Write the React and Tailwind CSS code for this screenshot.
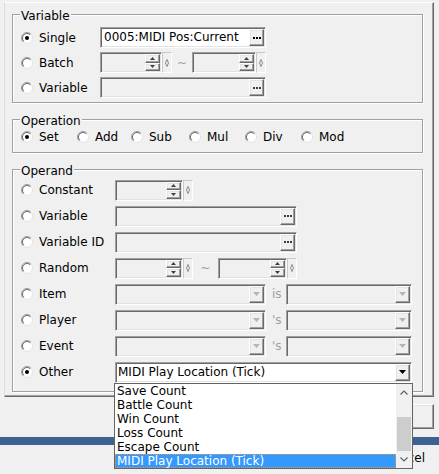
import React from 'react';

const sunken =
  'border border-t-[#a0a0a0] border-l-[#a0a0a0] border-b-white border-r-white shadow-[inset_1px_1px_0_#696969,inset_-1px_-1px_0_#e3e3e3]';
const raised =
  'border border-t-white border-l-white border-b-[#696969] border-r-[#696969] shadow-[inset_-1px_-1px_0_#a0a0a0,inset_1px_1px_0_#e3e3e3]';

const Radio = ({ checked }) => (
  <svg width="12" height="12" viewBox="0 0 12 12" className="shrink-0">
    <circle cx="6" cy="6" r="5.5" fill="#fff" stroke="#e3e3e3" />
    <path d="M2.1 9.9 A5.5 5.5 0 0 1 9.9 2.1" fill="none" stroke="#a0a0a0" />
    <path d="M2.8 9.2 A4.5 4.5 0 0 1 9.2 2.8" fill="none" stroke="#696969" />
    {checked && <circle cx="6" cy="6" r="2" fill="#000" />}
  </svg>
);

const Opt = ({ label, checked, w }) => (
  <div className={`flex items-center shrink-0 ${w}`}>
    <Radio checked={checked} />
    <span className="ml-[6px] leading-[14px]">{label}</span>
  </div>
);

const Dots = ({ on }) => (
  <div className={`w-[15px] h-full shrink-0 ${raised} bg-[#f0f0f0] flex items-center justify-center gap-[1px]`}>
    {[0, 1, 2].map((i) => (
      <span key={i} className={`w-[2px] h-[2px] ${on ? 'bg-black' : 'bg-[#3c3c3c]'}`} />
    ))}
  </div>
);

const TextBox = ({ w, value, on }) => (
  <div className={`${w} h-[21px] shrink-0 ${sunken} ${on ? 'bg-white' : 'bg-[#f0f0f0]'} p-[1px] flex`}>
    <div className="flex-1 min-w-0 overflow-hidden whitespace-nowrap pl-[2px] leading-[17px]">{value}</div>
    <Dots on={on} />
  </div>
);

const ArrowBtn = ({ up }) => (
  <div className={`flex-1 ${raised} bg-[#f0f0f0] flex items-center justify-center`}>
    <svg width="5" height="3" viewBox="0 0 5 3">
      <path d={up ? 'M2.5 0L5 3H0z' : 'M0 0h5L2.5 3z'} fill="#404040" />
    </svg>
  </div>
);

const Spin = ({ w }) => (
  <div className="flex shrink-0">
    <div className={`${w} h-[21px] ${sunken} bg-[#f0f0f0] p-[1px] flex justify-end`}>
      <div className="w-[15px] flex flex-col">
        <ArrowBtn up />
        <ArrowBtn />
      </div>
    </div>
    <div className="w-[10px] h-[21px] border border-t-[#c8c8c8] border-l-[#c8c8c8] border-b-white border-r-white flex items-center justify-center">
      <svg width="4" height="8" viewBox="0 0 4 8">
        <path d="M2 0.5L3.5 4L2 7.5L0.5 4z" fill="none" stroke="#808080" strokeWidth="0.9" />
      </svg>
    </div>
  </div>
);

const Combo = ({ w, value, on }) => (
  <div className={`${w} h-[21px] shrink-0 ${sunken} ${on ? 'bg-white' : 'bg-[#f0f0f0]'} p-[1px] flex`}>
    <div className="flex-1 min-w-0 pl-[1px] leading-[17px] whitespace-nowrap overflow-hidden">{value}</div>
    <div className={`w-[15px] h-full ${raised} bg-[#f0f0f0] flex items-center justify-center`}>
      <svg width="7" height="4" viewBox="0 0 7 4">
        <path d="M0 0h7L3.5 4z" fill={on ? '#000' : '#b4b4b4'} />
      </svg>
    </div>
  </div>
);

const Group = ({ title, className, children }) => (
  <div className={`relative w-[411px] border border-[#a0a0a0] shadow-[inset_1px_1px_0_#fff,1px_1px_0_#fff] ${className}`}>
    <span className="absolute left-[7px] -top-[6px] px-[1px] bg-[#f0f0f0] leading-[14px]">{title}</span>
    {children}
  </div>
);

const Row = ({ children }) => <div className="h-[26px] flex items-center pl-[8px]">{children}</div>;

const Sep = ({ w, children }) => (
  <span className={`${w} shrink-0 text-[#a0a0a0] leading-[14px]`}>{children}</span>
);

const items = ['Save Count', 'Battle Count', 'Win Count', 'Loss Count', 'Escape Count', 'MIDI Play Location (Tick)'];

export default function App() {
  return (
    <div className="relative w-[439px] h-[474px] overflow-hidden bg-[#f0f0f0] text-black text-[12px] font-['DejaVu_Sans',sans-serif] flex flex-col">
      {/* dialog page */}
      <div className="ml-[4px] mt-[2px] w-[430px] h-[395px] shrink-0 border border-t-white border-l-[#dcdcdc] border-r-[#696969] border-b-[#696969] shadow-[inset_-1px_-1px_0_#a0a0a0] flex flex-col pl-[7px]">
        <Group title="Variable" className="mt-[11px] pt-[10px] pb-[2px]">
          <div className="h-[25px] flex items-center pl-[8px]">
            <Opt label="Single" checked w="w-[79px]" />
            <TextBox w="w-[166px]" value="0005:MIDI Pos:Current" on />
          </div>
          <div className="h-[25px] flex items-center pl-[8px]">
            <Opt label="Batch" w="w-[79px]" />
            <Spin w="w-[62px]" />
            <Sep w="w-[20px] text-center">~</Sep>
            <Spin w="w-[64px]" />
          </div>
          <div className="h-[25px] flex items-center pl-[8px]">
            <Opt label="Variable" w="w-[79px]" />
            <TextBox w="w-[166px]" value="" />
          </div>
        </Group>

        <Group title="Operation" className="mt-[16px] pt-[4px] pb-[2px]">
          <Row>
            <Opt label="Set" checked w="w-[56px]" />
            <Opt label="Add" w="w-[54px]" />
            <Opt label="Sub" w="w-[58px]" />
            <Opt label="Mul" w="w-[56px]" />
            <Opt label="Div" w="w-[56px]" />
            <Opt label="Mod" w="w-[56px]" />
          </Row>
        </Group>

        <Group title="Operand" className="mt-[16px] pt-[7px] pb-[6px]">
          <Row>
            <Opt label="Constant" w="w-[94px]" />
            <Spin w="w-[68px]" />
          </Row>
          <Row>
            <Opt label="Variable" w="w-[94px]" />
            <TextBox w="w-[182px]" value="" />
          </Row>
          <Row>
            <Opt label="Variable ID" w="w-[94px]" />
            <TextBox w="w-[182px]" value="" />
          </Row>
          <Row>
            <Opt label="Random" w="w-[94px]" />
            <Spin w="w-[68px]" />
            <Sep w="w-[25px] text-center">~</Sep>
            <Spin w="w-[69px]" />
          </Row>
          <Row>
            <Opt label="Item" w="w-[94px]" />
            <Combo w="w-[151px]" />
            <Sep w="w-[20px] pl-[6px]">is</Sep>
            <Combo w="w-[126px]" />
          </Row>
          <Row>
            <Opt label="Player" w="w-[94px]" />
            <Combo w="w-[151px]" />
            <Sep w="w-[20px] pl-[6px]">'s</Sep>
            <Combo w="w-[126px]" />
          </Row>
          <Row>
            <Opt label="Event" w="w-[94px]" />
            <Combo w="w-[151px]" />
            <Sep w="w-[20px] pl-[6px]">'s</Sep>
            <Combo w="w-[126px]" />
          </Row>
          <Row>
            <Opt label="Other" checked w="w-[94px]" />
            <Combo w="w-[297px]" value="MIDI Play Location (Tick)" on />
          </Row>
        </Group>
      </div>

      {/* buttons */}
      <div className="mt-[7px] flex justify-end pr-[5px]">
        <div className={`w-[75px] h-[25px] ${raised} bg-[#f0f0f0] flex items-center justify-center`}>OK</div>
      </div>
      <div className="mt-[8px] h-[8px] bg-[#3d6190]" />
      <div className="mt-[6px] flex justify-end pr-[14px]">
        <span className="leading-[14px]">Cancel</span>
      </div>

      {/* open dropdown list */}
      <div className="absolute left-[114px] top-[383px] w-[299px] h-[86px] border border-[#646464] bg-white flex">
        <div className="flex-1 flex flex-col">
          {items.map((t, i) =>
            i === items.length - 1 ? (
              <div key={t} className="h-[14px] leading-[12px] pl-[1px] bg-[#3399ff] text-white border border-dotted border-[#e8953f]">
                {t}
              </div>
            ) : (
              <div key={t} className="h-[14px] leading-[14px] pl-[2px]">
                {t}
              </div>
            )
          )}
        </div>
        <div className="w-[16px] bg-[#f0f0f0] flex flex-col">
          <div className="h-[17px] flex items-center justify-center">
            <svg width="8" height="5" viewBox="0 0 8 5">
              <path d="M0.5 4.5L4 1L7.5 4.5" fill="none" stroke="#606060" strokeWidth="1.2" />
            </svg>
          </div>
          <div className="flex-1 flex justify-center">
            <div className="mt-[16px] w-[14px] h-[34px] bg-[#cdcdcd]" />
          </div>
          <div className="h-[17px] flex items-center justify-center">
            <svg width="8" height="5" viewBox="0 0 8 5">
              <path d="M0.5 0.5L4 4L7.5 0.5" fill="none" stroke="#606060" strokeWidth="1.2" />
            </svg>
          </div>
        </div>
      </div>
    </div>
  );
}
